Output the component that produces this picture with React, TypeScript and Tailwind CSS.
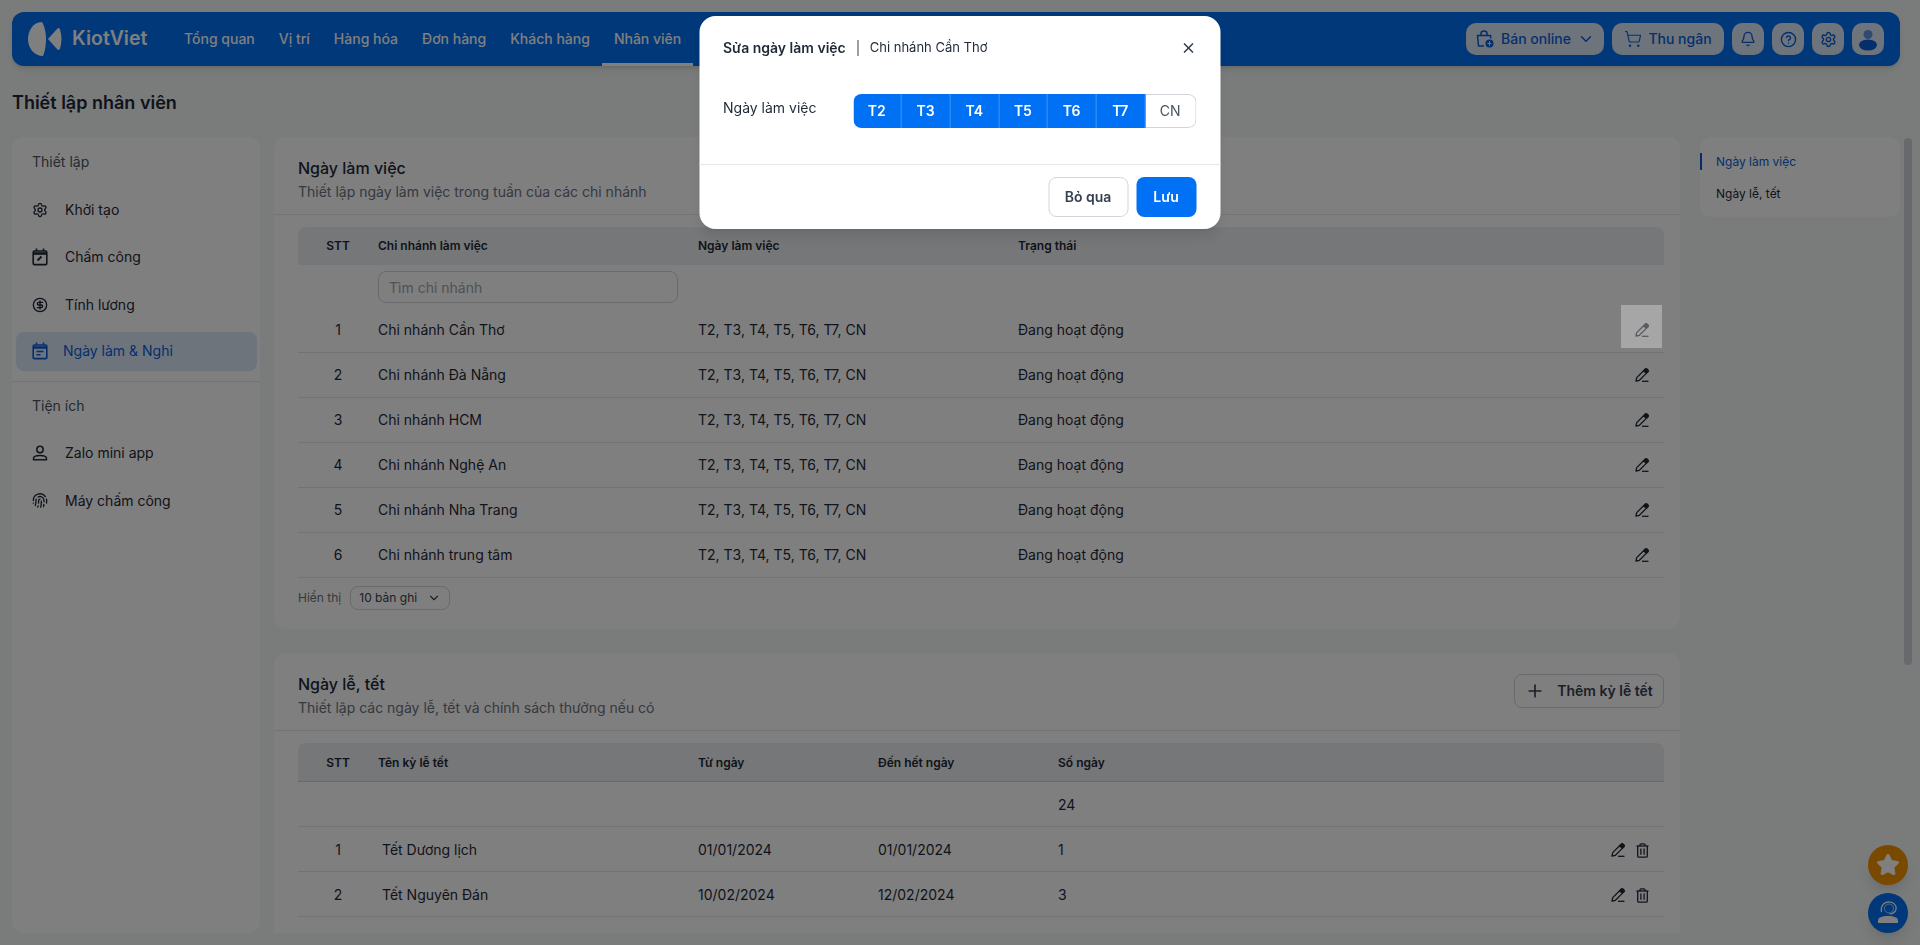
import {
  Bell,
  ChevronDown,
  CircleDollarSign,
  CircleHelp,
  Fingerprint,
  Plus,
  Settings,
  ShoppingCart,
  Star,
  X,
} from 'lucide-react';

const navItems = ['Tổng quan', 'Vị trí', 'Hàng hóa', 'Đơn hàng', 'Khách hàng', 'Nhân viên'];
const branches = [
  'Chi nhánh Cần Thơ',
  'Chi nhánh Đà Nẵng',
  'Chi nhánh HCM',
  'Chi nhánh Nghệ An',
  'Chi nhánh Nha Trang',
  'Chi nhánh trung tâm',
];
const holidays = [
  { name: 'Tết Dương lịch', from: '01/01/2024', to: '01/01/2024', days: '1' },
  { name: 'Tết Nguyên Đán', from: '10/02/2024', to: '12/02/2024', days: '3' },
];
const weekDays = ['T2', 'T3', 'T4', 'T5', 'T6', 'T7'];

const Logo = () => (
  <svg width="35" height="34" viewBox="0 0 35 34" fill="currentColor">
    <path d="M14 0C5 0 0 9 0 17C0 26 6 34 15 34C17 30 18 22 18 17C18 10 16 3 14 0Z" />
    <path d="M20 17L29 7Q31 5 32 7.5Q35 17 32 26.5Q31 29 29 27Z" />
  </svg>
);

const BagIcon = () => (
  <svg width="20" height="20" viewBox="0 0 20 20" fill="none" stroke="currentColor" strokeWidth="1.5">
    <path d="M9 17H3.5L2.5 6.5H15.5L15.8 9.5" strokeLinejoin="round" />
    <path d="M6 6.5V4.5C6 3 7.2 2 9 2C10.8 2 12 3 12 4.5V6.5" />
    <circle cx="14.5" cy="14.5" r="4" fill="currentColor" stroke="none" />
    <path d="M14.5 12V17M12.5 14.5H16.5" stroke="#dde8f8" strokeWidth="1" />
  </svg>
);

const NavUserIcon = () => (
  <svg width="24" height="24" viewBox="0 0 24 24">
    <circle cx="12" cy="7.5" r="4.5" fill="#5f95e6" />
    <ellipse cx="12" cy="18" rx="9" ry="5.5" fill="#0a5ed7" />
  </svg>
);

const CalendarEditIcon = () => (
  <svg width="16" height="18" viewBox="0 0 16 18" fill="none" stroke="currentColor" strokeWidth="1.6">
    <rect x="1.2" y="3" width="13.6" height="13.6" rx="1.2" />
    <path d="M1.2 5.5H14.8" strokeWidth="2.6" />
    <path d="M4.5 0.5V3M11.5 0.5V3" />
    <path d="M5.5 12.5L9.5 8.5" strokeWidth="2" />
  </svg>
);

const CalendarNoteIcon = () => (
  <svg width="16" height="18" viewBox="0 0 16 18" fill="none" stroke="currentColor" strokeWidth="1.6">
    <rect x="1.2" y="3" width="13.6" height="13.6" rx="1.2" />
    <path d="M1.2 5.5H14.8" strokeWidth="2.6" />
    <path d="M4.5 0.5V3M11.5 0.5V3" />
    <path d="M4.5 9.5H11.5M4.5 12.8H8.5" strokeWidth="1.4" />
  </svg>
);

const PersonIcon = () => (
  <svg width="16" height="16" viewBox="0 0 16 16" fill="none" stroke="currentColor" strokeWidth="1.5">
    <circle cx="8" cy="4.5" r="3.2" />
    <path d="M1.5 14.7V13.5C1.5 11.5 3.5 10.5 8 10.5C12.5 10.5 14.5 11.5 14.5 13.5V14.7H1.5Z" strokeLinejoin="round" />
  </svg>
);

const PenIcon = () => (
  <svg width="14" height="14" viewBox="0 0 14 14" fill="none" stroke="currentColor" strokeWidth="1.3">
    <path d="M1 13L1.7 9.6L8.6 2.7L11.3 5.4L4.4 12.3Z" strokeLinejoin="round" />
    <path d="M9 2.3L10.3 1C10.8 0.5 11.5 0.5 12 1L13 2C13.5 2.5 13.5 3.2 13 3.7L11.7 5Z" fill="currentColor" />
    <path d="M7 13.3H13.5" />
  </svg>
);

const TrashIcon = () => (
  <svg width="13" height="15" viewBox="0 0 13 15" fill="none" stroke="currentColor" strokeWidth="1.3">
    <path d="M0.5 3H12.5" />
    <path d="M4 3V1.8C4 1.2 4.4 0.8 5 0.8H8C8.6 0.8 9 1.2 9 1.8V3" />
    <path d="M1.7 3V13C1.7 13.7 2.2 14.2 2.9 14.2H10.1C10.8 14.2 11.3 13.7 11.3 13V3" />
    <path d="M4.9 5.5V11.7M8.1 5.5V11.7" />
  </svg>
);

const SupportIcon = () => (
  <svg width="24" height="24" viewBox="0 0 24 24" fill="none" stroke="#fff">
    <circle cx="13" cy="7.5" r="4.5" strokeWidth="1" opacity="0.7" />
    <path d="M5.5 11C4.2 5 8 0.8 13 0.8C18 0.8 21 5 20 8.5C19.2 11.5 17 12.7 13.5 13" strokeWidth="1.2" />
    <path d="M2 22V19.5C2 16.5 6 15 12 15C18 15 22 16.5 22 19.5V22H2Z" fill="#fff" stroke="none" />
  </svg>
);

const NavBar = () => (
  <header className="ml-3 mr-5 mt-3 flex h-[54px] items-center rounded-xl bg-[#0070f4] pl-4 pr-4 shadow-md">
    <div className="flex w-[144px] items-center gap-[9px] text-white">
      <Logo />
      <span className="text-[19.5px] font-semibold leading-none">KiotViet</span>
    </div>
    <nav className="flex h-full items-center">
      {navItems.map((item) => (
        <a
          key={item}
          className={`relative flex h-full items-center px-3 text-sm font-medium text-white ${
            item === 'Nhân viên' ? 'border-b-[3px] border-white pt-[3px]' : ''
          }`}
        >
          {item}
        </a>
      ))}
    </nav>
    <div className="ml-auto flex items-center gap-2 text-[#0a5ed7]">
      <button className="flex h-8 w-[138px] items-center justify-center gap-[6px] rounded-[10px] bg-[#dde8f8] text-sm font-medium">
        <BagIcon />
        Bán online
        <ChevronDown size={18} />
      </button>
      <button className="flex h-8 w-[112px] items-center justify-center gap-[6px] rounded-[10px] bg-[#dde8f8] text-sm font-medium">
        <ShoppingCart size={18} strokeWidth={1.5} />
        Thu ngân
      </button>
      <button className="flex h-8 w-8 items-center justify-center rounded-[10px] bg-[#dde8f8]">
        <Bell size={16} />
      </button>
      <button className="flex h-8 w-8 items-center justify-center rounded-[10px] bg-[#dde8f8]">
        <CircleHelp size={17} />
      </button>
      <button className="flex h-8 w-8 items-center justify-center rounded-[10px] bg-[#dde8f8]">
        <Settings size={17} />
      </button>
      <button className="flex h-8 w-8 items-center justify-center rounded-[10px] bg-[#dde8f8]">
        <NavUserIcon />
      </button>
    </div>
  </header>
);

const SideItem = ({ icon, label }: { icon: React.ReactNode; label: string }) => (
  <a className="flex h-[47.5px] items-center gap-[17px] pl-5 text-sm text-[#1f2937]">
    <span className="flex w-4 justify-center">{icon}</span>
    {label}
  </a>
);

const Sidebar = () => (
  <aside className="h-full w-[248px] shrink-0 rounded-xl bg-white pt-[12px]">
    <div className="flex h-[26px] items-center pl-5 text-sm text-[#4b5563]">Thiết lập</div>
    <div className="mt-[11px]">
      <SideItem icon={<Settings size={18} />} label="Khởi tạo" />
      <SideItem icon={<CalendarEditIcon />} label="Chấm công" />
      <SideItem icon={<CircleDollarSign size={18} />} label="Tính lương" />
    </div>
    <a className="ml-1 mr-[3px] mt-[3px] flex h-[39px] items-center gap-[15px] rounded-lg bg-[#dbe8f8] pl-4 text-sm text-[#0a5ed7]">
      <CalendarNoteIcon />
      Ngày làm &amp; Nghỉ
    </a>
    <div className="mt-[10px] border-t border-[#e5e7eb]" />
    <div className="mt-[11px] flex h-[26px] items-center pl-5 text-sm text-[#4b5563]">Tiện ích</div>
    <div className="mt-[11px]">
      <SideItem icon={<PersonIcon />} label="Zalo mini app" />
      <SideItem icon={<Fingerprint size={17} />} label="Máy chấm công" />
    </div>
  </aside>
);

const SectionHead = ({ title, sub, action }: { title: string; sub: string; action?: React.ReactNode }) => (
  <div className="flex h-[78px] items-start justify-between border-b border-[#e5e7eb] pl-6 pr-4 pt-[19px]">
    <div>
      <h2 className="text-base font-medium leading-6 text-[#1f2937]">{title}</h2>
      <p className="mt-[2px] text-sm leading-5 text-[#6b7280]">{sub}</p>
    </div>
    {action}
  </div>
);

const BranchTable = () => (
  <div className="ml-6 mr-4 mt-3">
    <div className="grid h-[38px] grid-cols-[80px_320px_320px_1fr] items-center rounded-t-lg bg-[#edeff1] text-xs font-semibold text-[#1f2937]">
      <span className="text-center">STT</span>
      <span>Chi nhánh làm việc</span>
      <span>Ngày làm việc</span>
      <span>Trạng thái</span>
    </div>
    <div className="flex h-[43px] pl-20 pt-[6px]">
      <input
        placeholder="Tìm chi nhánh"
        className="h-8 w-[300px] rounded-lg border border-[#d1d5db] px-[10px] text-sm placeholder:text-[#9ca3af]"
      />
    </div>
    {branches.map((branch, i) => (
      <div
        key={branch}
        className="grid h-[45px] grid-cols-[80px_320px_320px_1fr_auto] items-center border-b border-[#e5e7eb] text-sm text-[#1f2937]"
      >
        <span className="text-center">{i + 1}</span>
        <span>{branch}</span>
        <span>T2, T3, T4, T5, T6, T7, CN</span>
        <span>Đang hoạt động</span>
        <span className="mr-[15px]">
          <PenIcon />
        </span>
      </div>
    ))}
    <div className="mt-2 flex items-center gap-[9px] text-xs text-[#6b7280]">
      Hiển thị
      <button className="flex h-6 w-[100px] items-center justify-center gap-[10px] rounded-lg border border-[#d1d5db] text-xs text-[#374151]">
        10 bản ghi
        <ChevronDown size={14} />
      </button>
    </div>
  </div>
);

const HolidayTable = () => (
  <div className="ml-6 mr-4 mt-3">
    <div className="grid h-[39px] grid-cols-[80px_320px_180px_180px_1fr] items-center rounded-t-lg border-b border-[#d1d5db] bg-[#edeff1] pt-px text-xs font-semibold text-[#1f2937]">
      <span className="text-center">STT</span>
      <span>Tên kỳ lễ tết</span>
      <span>Từ ngày</span>
      <span>Đến hết ngày</span>
      <span>Số ngày</span>
    </div>
    <div className="grid h-[45px] grid-cols-[760px_1fr] items-center border-b border-[#e5e7eb] pt-[2px] text-sm text-[#1f2937]">
      <span />
      <span>24</span>
    </div>
    {holidays.map((row, i) => (
      <div
        key={row.name}
        className="grid h-[45px] grid-cols-[80px_320px_180px_180px_1fr_auto] items-center border-b border-[#e5e7eb] pt-[2px] text-sm text-[#1f2937]"
      >
        <span className="text-center">{i + 1}</span>
        <span className="pl-1">{row.name}</span>
        <span>{row.from}</span>
        <span>{row.to}</span>
        <span>{row.days}</span>
        <span className="mr-[15px] flex items-center gap-[11px]">
          <PenIcon />
          <TrashIcon />
        </span>
      </div>
    ))}
  </div>
);

const EditModal = () => (
  <div className="fixed inset-0 z-40 bg-black/50">
    <div className="mx-auto mt-4 w-[521px] translate-x-[-0.5px] rounded-2xl bg-white shadow-lg">
      <div className="flex h-[78px] items-start justify-between px-6 pt-[24px]">
        <div className="flex h-4 items-center text-[13px] text-[#1f2937]">
          <span className="text-sm font-semibold">Sửa ngày làm việc</span>
          <span className="ml-3 mr-[11px] h-4 border-l border-[#374151]" />
          <span>Chi nhánh Cần Thơ</span>
        </div>
        <X size={16} strokeWidth={2.5} className="text-[#374151]" />
      </div>
      <div className="flex h-[71px] items-start border-b border-[#e5e7eb] px-6">
        <span className="w-[130px] pt-1 text-sm leading-5 text-[#1f2937]">Ngày làm việc</span>
        <div className="grid h-[34px] w-[343px] grid-cols-[repeat(6,48.7px)_1fr] overflow-hidden rounded-lg text-sm">
          {weekDays.map((day) => (
            <span
              key={day}
              className="flex items-center justify-center border-r border-[#2b8af7] bg-[#0070f4] font-semibold text-white last:border-r-0"
            >
              {day}
            </span>
          ))}
          <span className="flex items-center justify-center rounded-r-lg border border-l-0 border-[#d1d5db] text-[#4b5563]">
            CN
          </span>
        </div>
      </div>
      <div className="flex h-[64px] items-center justify-end gap-2 px-6">
        <button className="h-10 w-20 rounded-lg border border-[#d1d5db] text-sm font-semibold text-[#374151]">
          Bỏ qua
        </button>
        <button className="h-10 w-[60px] rounded-lg bg-[#0070f4] text-sm font-semibold text-white">Lưu</button>
      </div>
    </div>
    {/* hover highlight sitting on top of the backdrop */}
    <div className="absolute left-[1621px] top-[305px] h-[43px] w-[41px] bg-white/30" />
  </div>
);

export default function App() {
  return (
    <div className="relative h-[945px] w-[1920px] overflow-hidden bg-[#f4f7f6] [font-family:Inter,sans-serif]">
      <NavBar />
      <h1 className="mx-3 mt-[26px] h-[45px] text-lg font-semibold leading-[22px] text-[#1f2937]">Thiết lập nhân viên</h1>
      <div className="mx-3 flex h-[796px] items-start gap-[14px] overflow-hidden">
        <Sidebar />
        <main className="flex w-[1406px] shrink-0 flex-col gap-[24px]">
          <section className="h-[492px] rounded-xl bg-white">
            <SectionHead title="Ngày làm việc" sub="Thiết lập ngày làm việc trong tuần của các chi nhánh" />
            <BranchTable />
          </section>
          <section className="h-[280px] rounded-t-xl bg-white">
            <SectionHead
              title="Ngày lễ, tết"
              sub="Thiết lập các ngày lễ, tết và chính sách thưởng nếu có"
              action={
                <button className="mt-[2px] flex h-[34px] w-[150px] items-center justify-center gap-[12px] rounded-lg border border-[#d1d5db] text-sm font-semibold text-[#374151]">
                  <Plus size={20} />
                  Thêm kỳ lễ tết
                </button>
              }
            />
            <HolidayTable />
          </section>
        </main>
        <div className="ml-[6px] h-20 w-[200px] shrink-0 rounded-xl bg-white pt-4 text-xs">
          <a className="flex h-[17px] items-center border-l-2 border-[#0a5ed7] pl-[14px] text-[#0a5ed7]">Ngày làm việc</a>
          <a className="mt-[15px] flex h-[17px] items-center pl-4 text-[#1f2937]">Ngày lễ, tết</a>
        </div>
      </div>
      <div className="absolute left-[1904px] top-[138px] h-[527px] w-2 rounded bg-[#cfd2d8]" />
      <button className="absolute left-[1868px] top-[845px] flex h-10 w-10 items-center justify-center rounded-full bg-[#f59300] text-white shadow-lg">
        <Star size={24} fill="currentColor" strokeLinejoin="round" />
      </button>
      <button className="absolute left-[1868px] top-[893px] flex h-10 w-10 items-center justify-center rounded-full bg-[#0070f4] shadow-lg">
        <SupportIcon />
      </button>
      <EditModal />
    </div>
  );
}
